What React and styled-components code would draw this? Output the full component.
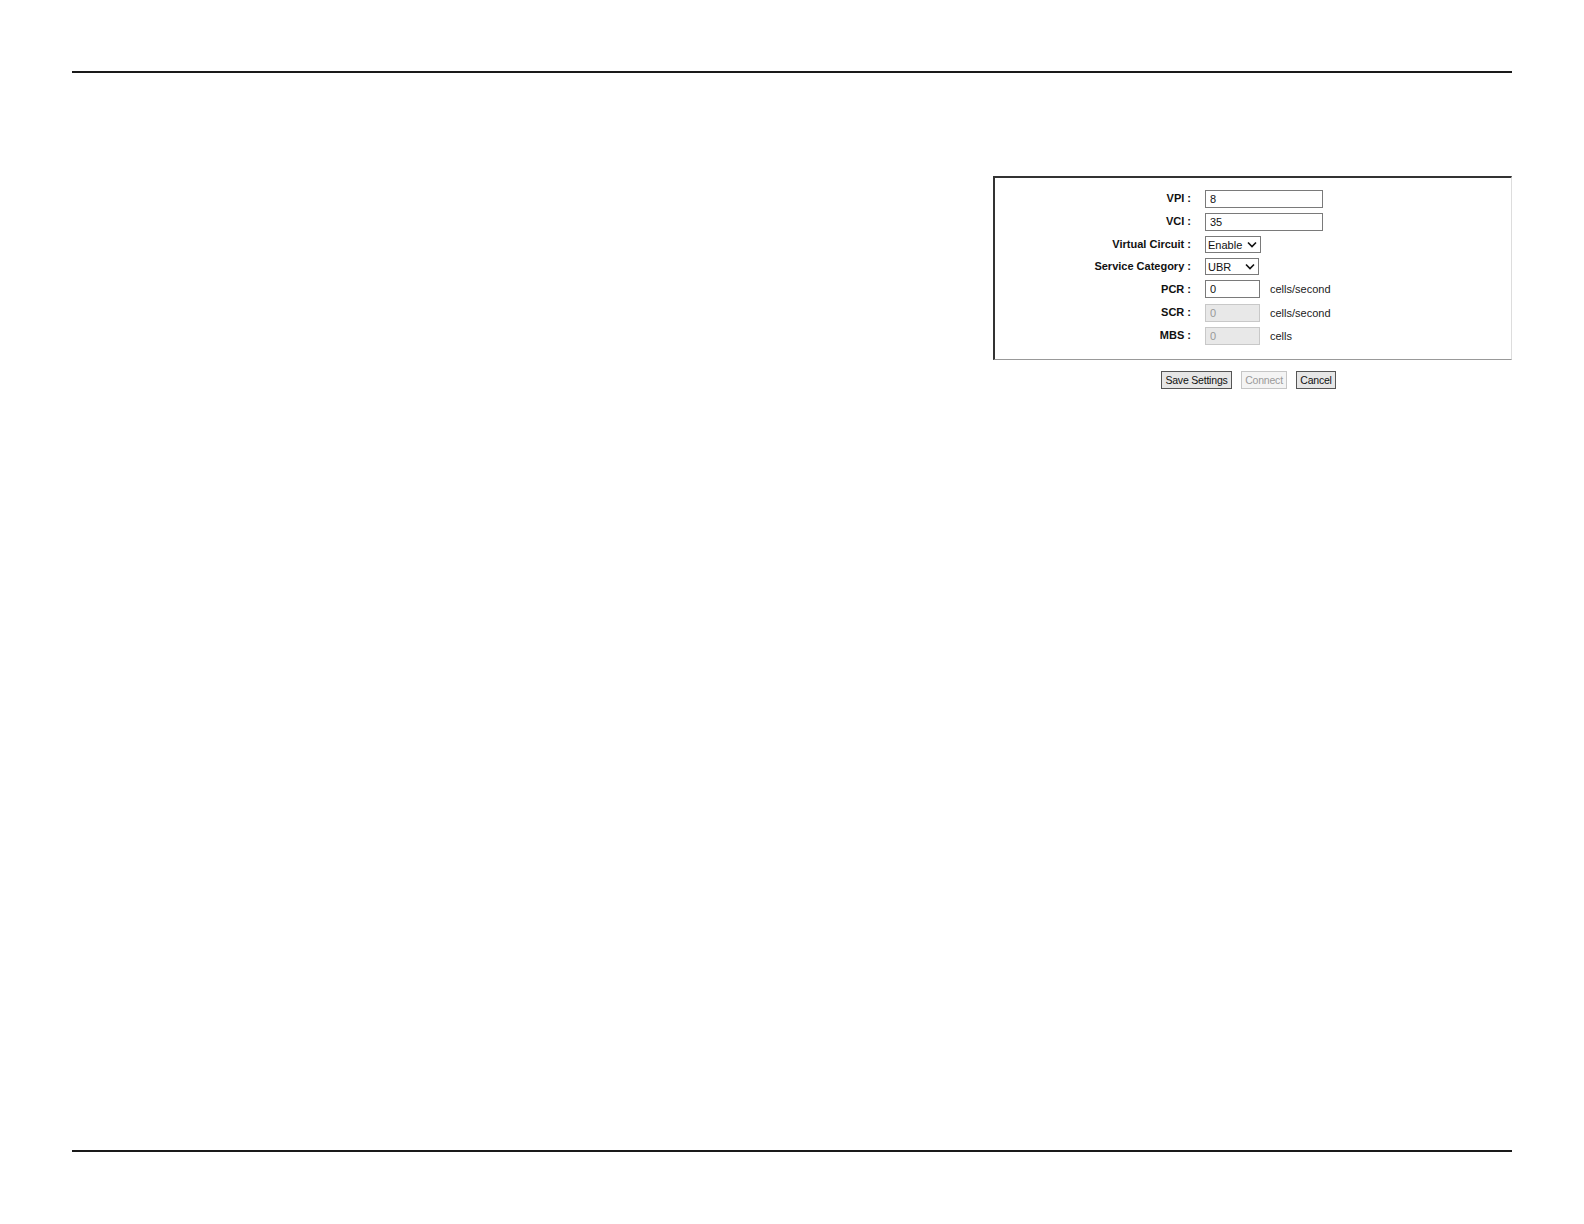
import React from "react";
import styled, { createGlobalStyle } from "styled-components";

const Global = createGlobalStyle`
  html, body { margin: 0; padding: 0; background: #fff; overflow: hidden; }
  body { font-family: "Liberation Sans", Arial, sans-serif; }
`;

const Page = styled.div`
  width: 100%;
  box-sizing: border-box;
  padding: 71px 72px 0 72px;
  display: flex;
  flex-direction: column;
`;

const Rule = styled.div`
  height: 2px;
  background: #1a1a1a;
`;

const Content = styled.div`
  height: 1077px;
  display: flex;
  flex-direction: column;
  align-items: flex-end;
  padding-top: 103px;
  box-sizing: border-box;
`;

const Panel = styled.div`
  width: 519px;
  display: flex;
  flex-direction: column;
`;

const Box = styled.div`
  box-sizing: border-box;
  height: 184px;
  border-top: 2px solid #333;
  border-left: 2px solid #333;
  border-bottom: 1px solid #999;
  border-right: 1px solid #ddd;
  padding-top: 9px;
  display: grid;
  grid-template-columns: 196px 1fr;
  column-gap: 14px;
  align-content: start;
  align-items: center;
`;

const Label = styled.div`
  font-weight: bold;
  font-size: 11px;
  color: #111;
  text-align: right;
  white-space: nowrap;
  height: ${p => p.$h}px;
  line-height: ${p => p.$h}px;
`;

const Field = styled.div`
  display: flex;
  align-items: center;
  gap: 10px;
  height: ${p => p.$h}px;
`;

const Input = styled.input`
  box-sizing: border-box;
  width: ${p => p.$w}px;
  height: 18px;
  border: 1px solid ${p => (p.disabled ? "#c8c8c8" : "#7a7a7a")};
  background: ${p => (p.disabled ? "#e8e8e8" : "#fff")};
  color: ${p => (p.disabled ? "#999" : "#111")};
  font-family: "Liberation Sans", Arial, sans-serif;
  font-size: 11px;
  padding: 0 4px;
  margin: 0;
  outline: none;
`;

const SelectBox = styled.div`
  box-sizing: border-box;
  width: ${p => p.$w}px;
  height: 17px;
  border: 1px solid #7a7a7a;
  background: #fff;
  display: flex;
  align-items: center;
  justify-content: space-between;
  padding: 0 3px 0 2px;
  font-size: 11px;
  color: #111;
`;

const Unit = styled.span`
  font-size: 11px;
  color: #222;
  white-space: nowrap;
`;

const Buttons = styled.div`
  display: flex;
  gap: 9px;
  padding-left: 168px;
  margin-top: 11px;
`;

const Button = styled.button`
  box-sizing: border-box;
  height: 18px;
  width: ${p => p.$w}px;
  padding: 0;
  margin: 0;
  white-space: nowrap;
  border: 1px solid ${p => (p.disabled ? "#c6c6c6" : "#555")};
  background: ${p => (p.disabled ? "#f4f4f4" : "#e6e6e6")};
  color: ${p => (p.disabled ? "#9a9a9a" : "#111")};
  font-family: "Liberation Sans", Arial, sans-serif;
  font-size: 10.5px;
  letter-spacing: -0.2px;
  line-height: 16px;
`;

const Chevron = () => (
  <svg width="10" height="7" viewBox="0 0 10 7">
    <path d="M1 1.5 L5 5.5 L9 1.5" fill="none" stroke="#111" strokeWidth="1.6" />
  </svg>
);

const rows = [
  { label: "VPI :", h: 23, kind: "input", w: 118, value: "8" },
  { label: "VCI :", h: 23, kind: "input", w: 118, value: "35" },
  { label: "Virtual Circuit :", h: 23, kind: "select", w: 56, value: "Enable" },
  { label: "Service Category :", h: 21, kind: "select", w: 54, value: "UBR" },
  { label: "PCR :", h: 24, kind: "input", w: 55, value: "0", unit: "cells/second" },
  { label: "SCR :", h: 23, kind: "input", w: 55, value: "0", unit: "cells/second", disabled: true },
  { label: "MBS :", h: 23, kind: "input", w: 55, value: "0", unit: "cells", disabled: true },
];

export default function App() {
  return (
    <>
      <Global />
      <Page>
        <Rule />
        <Content>
          <Panel>
            <Box>
              {rows.map(r => (
                <React.Fragment key={r.label}>
                  <Label $h={r.h}>{r.label}</Label>
                  <Field $h={r.h}>
                    {r.kind === "input" ? (
                      <Input $w={r.w} defaultValue={r.value} disabled={r.disabled} readOnly />
                    ) : (
                      <SelectBox $w={r.w}>
                        <span>{r.value}</span>
                        <Chevron />
                      </SelectBox>
                    )}
                    {r.unit && <Unit>{r.unit}</Unit>}
                  </Field>
                </React.Fragment>
              ))}
            </Box>
            <Buttons>
              <Button $w={71}>Save Settings</Button>
              <Button $w={46} disabled>Connect</Button>
              <Button $w={40}>Cancel</Button>
            </Buttons>
          </Panel>
        </Content>
        <Rule />
      </Page>
    </>
  );
}
